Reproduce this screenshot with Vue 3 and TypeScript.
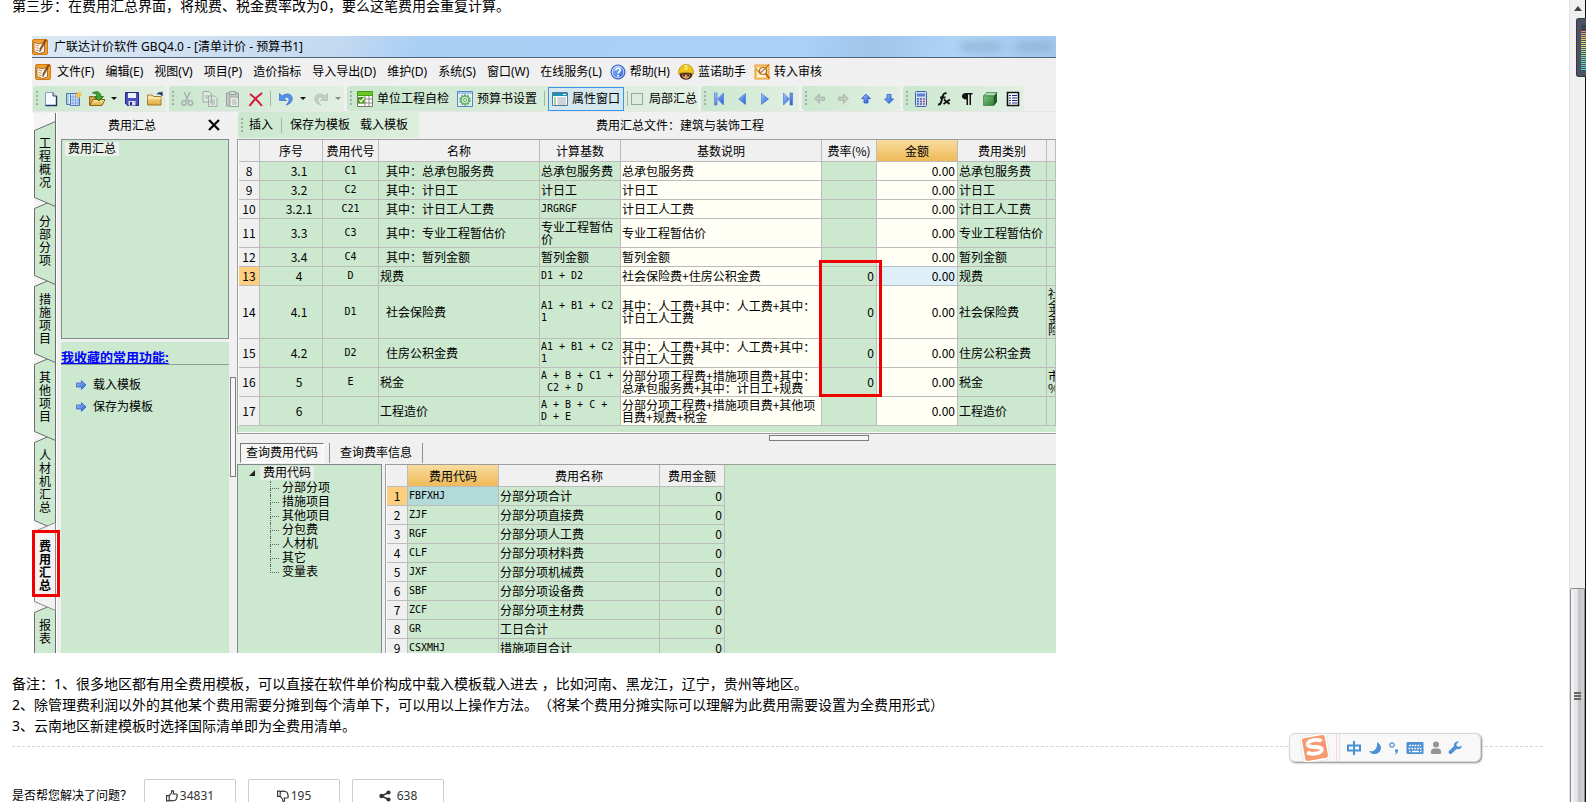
<script setup lang="ts">
interface Item { icon?: string; kind?: 'arrow' | 'sep'; name?: string; dim?: boolean }
interface FeeRow {
  n: number; no: string; code: string; name: string; base: string; desc: string
  rate: string; kind: string; note?: string; size: 'one' | 'two' | 'four'; sub?: boolean
}

const sideTabs = [
  { label: '工程概况', h: 86 },
  { label: '分部分项', h: 86 },
  { label: '措施项目', h: 86 },
  { label: '其他项目', h: 86 },
  { label: '人材机汇总', h: 97 },
  { label: '费用汇总', h: 89, active: true },
  { label: '报表', h: 86 },
]

const menus: { label: string; icon?: string }[] = [
  { label: '文件(F)' }, { label: '编辑(E)' }, { label: '视图(V)' }, { label: '项目(P)' },
  { label: '造价指标' }, { label: '导入导出(D)' }, { label: '维护(D)' }, { label: '系统(S)' },
  { label: '窗口(W)' }, { label: '在线服务(L)' },
  { label: '帮助(H)', icon: 'help' }, { label: '蓝诺助手', icon: 'helmet' }, { label: '转入审核', icon: 'review' },
]

const startGroups: Item[][] = [
  [
    { icon: 'new', name: '新建' }, { icon: 'book', name: '新建项目' }, { icon: 'open', name: '打开' },
    { kind: 'arrow', name: '打开选项' }, { icon: 'save', name: '保存' }, { icon: 'folder', name: '目录' },
  ],
  [
    { icon: 'cut', name: '剪切' }, { icon: 'copy', name: '复制' }, { icon: 'paste', name: '粘贴' },
    { icon: 'delete', name: '删除' }, { kind: 'sep' }, { icon: 'undo', name: '撤销' },
    { kind: 'arrow', name: '撤销选项' }, { icon: 'redo', name: '恢复' }, { kind: 'arrow', name: '恢复选项', dim: true },
  ],
]
const endGroups: Item[][] = [
  [
    { icon: 'first', name: '第一条' }, { icon: 'prev', name: '上一条' },
    { icon: 'next', name: '下一条' }, { icon: 'last', name: '最后一条' },
  ],
  [
    { icon: 'left', name: '左移' }, { icon: 'right', name: '右移' },
    { icon: 'up', name: '上移' }, { icon: 'down', name: '下移' },
  ],
  [
    { icon: 'calc', name: '计算器' }, { icon: 'fx', name: '函数' }, { icon: 'para', name: '段落' },
    { icon: 'cube', name: '图元' }, { icon: 'list', name: '列表' },
  ],
]

const feeRows: FeeRow[] = [
  { n: 8, no: '3.1', code: 'C1', name: '其中：总承包服务费', base: '总承包服务费', desc: '总承包服务费', rate: '', kind: '总承包服务费', size: 'one', sub: true },
  { n: 9, no: '3.2', code: 'C2', name: '其中：计日工', base: '计日工', desc: '计日工', rate: '', kind: '计日工', size: 'one', sub: true },
  { n: 10, no: '3.2.1', code: 'C21', name: '其中：计日工人工费', base: 'JRGRGF', desc: '计日工人工费', rate: '', kind: '计日工人工费', size: 'one', sub: true },
  { n: 11, no: '3.3', code: 'C3', name: '其中：专业工程暂估价', base: '专业工程暂估\n价', desc: '专业工程暂估价', rate: '', kind: '专业工程暂估价', size: 'two', sub: true },
  { n: 12, no: '3.4', code: 'C4', name: '其中：暂列金额', base: '暂列金额', desc: '暂列金额', rate: '', kind: '暂列金额', size: 'one', sub: true },
  { n: 13, no: '4', code: 'D', name: '规费', base: 'D1 + D2', desc: '社会保险费+住房公积金费', rate: '0', kind: '规费', size: 'one' },
  { n: 14, no: '4.1', code: 'D1', name: '社会保险费', base: 'A1 + B1 + C2\n1', desc: '其中：人工费+其中：人工费+其中：\n计日工人工费', rate: '0', kind: '社会保险费', note: '社\n金\n金\n险', size: 'four', sub: true },
  { n: 15, no: '4.2', code: 'D2', name: '住房公积金费', base: 'A1 + B1 + C2\n1', desc: '其中：人工费+其中：人工费+其中：\n计日工人工费', rate: '0', kind: '住房公积金费', size: 'two', sub: true },
  { n: 16, no: '5', code: 'E', name: '税金', base: 'A + B + C1 +\n C2 + D', desc: '分部分项工程费+措施项目费+其中：\n总承包服务费+其中：计日工+规费', rate: '0', kind: '税金', note: '市\n%', size: 'two' },
  { n: 17, no: '6', code: '', name: '工程造价', base: 'A + B + C +\nD + E', desc: '分部分项工程费+措施项目费+其他项\n目费+规费+税金', rate: '', kind: '工程造价', size: 'two' },
]
const isCode = (s: string): boolean => /^[A-Z]/.test(s)

const tree = ['分部分项', '措施项目', '其他项目', '分包费', '人材机', '其它', '变量表']

const codes: [string, string][] = [
  ['FBFXHJ', '分部分项合计'], ['ZJF', '分部分项直接费'], ['RGF', '分部分项人工费'],
  ['CLF', '分部分项材料费'], ['JXF', '分部分项机械费'], ['SBF', '分部分项设备费'],
  ['ZCF', '分部分项主材费'], ['GR', '工日合计'], ['CSXMHJ', '措施项目合计'],
]
const meter = ['#2f3540', '#2f3540', '#2f3540', '#e08a6a', '#e8a070', '#ecb070', '#efc070', '#f0cc70', '#efd870', '#e8e070', '#dde478', '#cce480', '#b8e488', '#a4e490', '#94e298', '#88e0a0', '#80dfa8', '#78deb0', '#70dcb8', '#68dac0', '#60d8c8', '#58d6d0', '#54d4d4']
</script>

<template>
  <svg class="defs" aria-hidden="true">
    <defs>
      <linearGradient id="blue" x1="0" y1="0" x2="1" y2="1"><stop offset="0" stop-color="#a9c9fb" /><stop offset="1" stop-color="#2058d0" /></linearGradient>
      <linearGradient id="gold" x1="0" y1="0" x2="0" y2="1"><stop offset="0" stop-color="#fbe9a6" /><stop offset="1" stop-color="#dfa83a" /></linearGradient>
      <linearGradient id="leaf" x1="0" y1="0" x2="1" y2="1"><stop offset="0" stop-color="#7cc47c" /><stop offset="1" stop-color="#2f7d38" /></linearGradient>
    </defs>
    <symbol id="i-app" viewBox="0 0 16 16"><rect x=".5" y=".5" width="15" height="15" rx="1.5" fill="#f0a030" stroke="#d07a10" /><path d="M2 3.500 7.500 5l5-2v10l-5 1.500-5.500-2z" fill="#fffaf0" stroke="#8a4a10" stroke-width=".7" /><path d="M3.500 6 7 7M3.500 8.500l3 .8M3.500 11l3 .6" stroke="#b07030" stroke-width=".8" /><path d="m14.500 1-5 9-1.800 3 .300-3.500L12.800 1z" fill="#a0521a" stroke="#5c2c08" stroke-width=".5" /></symbol>
    <symbol id="i-help" viewBox="0 0 16 16"><circle cx="8" cy="8" r="7" fill="url(#blue)" stroke="#2a55b8" /><circle cx="8" cy="8" r="5.800" fill="none" stroke="#dce9ff" stroke-width=".8" /><path d="M5.800 6.300c0-3 4.600-2.800 4.400 0-.1 1.500-2.100 1.500-2.100 3.200" fill="none" stroke="#fff" stroke-width="1.700" /><circle cx="8.100" cy="11.800" r="1.100" fill="#fff" /></symbol>
    <symbol id="i-helmet" viewBox="0 0 16 16"><path d="M1.500 8.500h13c.5 4.500-2.500 7.200-6.500 7.200s-7-2.700-6.500-7.200z" fill="#4a2618" /><path d="M4 10.500h8c.2 2.600-1.500 4.300-4 4.300s-4.200-1.700-4-4.300z" fill="#d99a6c" /><path d="M.3 10C.3 4 3.500.5 8 .5S15.700 4 15.700 10c-4-2-11.400-2-15.400 0z" fill="#f0c41c" stroke="#b88808" stroke-width=".7" /><path d="M6.500 1h3v5h-3z" fill="#fbe36a" /><path d="M5 11.500h1.800M9.200 11.500H11" stroke="#301808" stroke-width="1.600" /></symbol>
    <symbol id="i-review" viewBox="0 0 16 16"><rect x="1" y="1" width="14" height="14" fill="#f8c868" stroke="#e89a30" /><path d="M3 3.500h9v10H3z" fill="#fff3d0" /><circle cx="9" cy="7" r="3.500" fill="#e8f4ff" stroke="#b07020" stroke-width="1.200" /><path d="m11.500 9.500 4 5" stroke="#c06010" stroke-width="2" /><path d="m2.500 5 3.500 4.500L15 .5" fill="none" stroke="#c07818" stroke-width="1.200" /></symbol>
    <symbol id="i-new" viewBox="0 0 16 16"><path d="M2.500 1.500H10l3.500 3.500v9.500h-11z" fill="#f8fbff" stroke="#8a9cc0" /><path d="M10 1.500V5h3.500" fill="#c8d6ef" stroke="#35456e" /><path d="M13.500 5v9.500h-11" fill="none" stroke="#223463" stroke-width="1.400" /></symbol>
    <symbol id="i-book" viewBox="0 0 16 16"><path d="M.5 2.500h4v11h-4zM4.500 2.500h9v12h-9z" fill="#dfeafa" stroke="#4b78b8" /><path d="M7 3v11M9.500 3v11M12 3v11M2 3v10M5 6h8M5 9h8M5 12h8" stroke="#6f9bd4" stroke-width=".8" /><path d="m12.500 0 .8 2.200L15.800 1l-1 2.300 1.200 1.200-2 .5.500 2.500-2-1.500L10.600 7l.6-2.200L9 4l2-1-.6-2.200 1.600.9z" fill="#f6bf3c" /></symbol>
    <symbol id="i-open" viewBox="0 0 16 16"><path d="M.5 14V5.500h4l1.500 2h7V14z" fill="#d9a53c" stroke="#8c651a" /><path d="m.8 14.500 3-6H16l-3 6z" fill="url(#gold)" stroke="#8c651a" /><path d="M3.500 2c4.500-2.500 8-1 8.500 3.500h2.500L10 10 5.500 5.500H8C7.800 3 6 2 3.500 2z" fill="#3fa42a" stroke="#1c6414" stroke-width=".8" /></symbol>
    <symbol id="i-save" viewBox="0 0 16 16"><path d="M1.500 1.500h13v13h-11l-2-2z" fill="#4a4fc0" stroke="#25287c" /><path d="M4 2h8v5H4z" fill="#eef2ff" /><path d="M4.500 10h7v4.500h-7z" fill="#d8def4" /><path d="M6 11h2v3H6z" fill="#25287c" /></symbol>
    <symbol id="i-folder" viewBox="0 0 16 16"><path d="M.5 14V4h5l1 1.500H14V14z" fill="url(#gold)" stroke="#a37a26" /><path d="M.5 7H14" stroke="#fff4cc" /><path d="M9.500 3.500c1-2 2.500-2.500 4-2.200L15.500.5l.3 4.800-3.800-2z" fill="#24406e" /></symbol>
    <symbol id="i-cut" viewBox="0 0 16 16"><path d="m5 1 4.500 9M11 1 6.500 10" stroke="#a8aeb0" stroke-width="1.400" /><circle cx="5" cy="12" r="2.200" fill="none" stroke="#a8aeb0" stroke-width="1.500" /><circle cx="11.500" cy="12" r="2.200" fill="none" stroke="#a8aeb0" stroke-width="1.500" /></symbol>
    <symbol id="i-copy" viewBox="0 0 16 16"><path d="M1 .5h6l2.500 2.500v8H1zM6.500 5h6L15 7.500v8H6.500z" fill="#dfe9e0" stroke="#a3aba6" /><path d="M3 5h4M3 7h3M8.500 9h4.500M8.500 11h4.500M8.500 13h4.500" stroke="#a3aba6" /></symbol>
    <symbol id="i-paste" viewBox="0 0 16 16"><rect x="1.500" y="2" width="12" height="13" fill="#bfc6c0" stroke="#9aa29c" /><path d="M4.500.5h6v3h-6z" fill="#d8dcd8" stroke="#9aa29c" /><path d="M5 6h6.500l2 2v7.500H5z" fill="#e8efe8" stroke="#9aa29c" /><path d="M7 9h4M7 11h5M7 13h5" stroke="#a8b0aa" /></symbol>
    <symbol id="i-delete" viewBox="0 0 16 16"><path d="M2 3c4 3 9 8 12 12M14 2C10 5 5 10 1.500 15" fill="none" stroke="#d81838" stroke-width="2" /></symbol>
    <symbol id="i-undo" viewBox="0 0 16 16"><path d="M1.500 2.500V9.500h7L6.200 7.200c2.800-2 5.300-.4 4.800 2.100-.3 1.700-1.200 3.200-3 4.700 4.500-1 6.700-4 6.200-7C13.700 2.700 8.300 1.500 4 5z" fill="#5590ee" stroke="#2a5cc0" stroke-width=".6" /></symbol>
    <symbol id="i-redo" viewBox="0 0 16 16"><path d="M14.500 2.500V9.500h-7l2.300-2.300C7 5.200 4.500 6.800 5 9.300c.3 1.700 1.200 3.200 3 4.700-4.500-1-6.700-4-6.200-7C2.300 2.700 7.700 1.500 12 5z" fill="#c2cec4" stroke="#aab6ae" stroke-width=".6" /></symbol>
    <symbol id="i-check" viewBox="0 0 16 16"><path d="M.5.500h15v15H.5z" fill="#fff" stroke="#777" /><path d="M.5.500h15v4H.5z" fill="#6cc824" stroke="#4e9c18" /><path d="M.5 8h15M.5 12h15M8 5v10.500M12 5v10.500" stroke="#8a8a8a" /><path d="M1 6h6.500v6.500H1z" fill="#4e9c18" /><path d="m2.500 9 1.500 1.700L7 7" fill="none" stroke="#fff" stroke-width="1.200" /></symbol>
    <symbol id="i-gear" viewBox="0 0 16 16"><path d="M.5.500h15v15H.5z" fill="#e4effb" stroke="#5b86c4" /><path d="M1 1h14v2H1z" fill="#a8c6ec" /><circle cx="8" cy="9" r="4.800" fill="none" stroke="#55a858" stroke-width="1.800" stroke-dasharray="2 1" /><circle cx="8" cy="9" r="3.900" fill="#d4efd4" stroke="#55a858" /><circle cx="8" cy="9" r="1.500" fill="#fff" stroke="#55a858" /></symbol>
    <symbol id="i-prop" viewBox="0 0 16 16"><path d="M.5 1.500h15v13H.5z" fill="#fff" stroke="#587898" /><path d="M1 2h14v3H1z" fill="#2090b8" /><path d="M11 3.500h3" stroke="#fff" /><path d="M2 7h2M2 9h2M2 11h2M2 13h2" stroke="#45a648" /><path d="M5.500 7H14M5.500 9H14M5.500 11H14M5.500 13H14" stroke="#9aa6ae" /></symbol>
    <symbol id="i-first" viewBox="0 0 16 16"><path d="M3.500 2h2.500v12H3.500zM12.500 2v12L6.500 8z" fill="url(#blue)" stroke="#4070d8" stroke-width=".6" /></symbol>
    <symbol id="i-prev" viewBox="0 0 16 16"><path d="M11.500 2.500v11L4.500 8z" fill="url(#blue)" stroke="#4070d8" stroke-width=".6" /></symbol>
    <symbol id="i-next" viewBox="0 0 16 16"><path d="M4.500 2.500v11L11.500 8z" fill="url(#blue)" stroke="#4070d8" stroke-width=".6" /></symbol>
    <symbol id="i-last" viewBox="0 0 16 16"><path d="M10 2h2.500v12H10zM3.500 2v12L9.500 8z" fill="url(#blue)" stroke="#4070d8" stroke-width=".6" /></symbol>
    <symbol id="i-left" viewBox="0 0 16 16"><path d="M2.500 7.500 7.500 3v3h5v3.500h-5v3z" fill="#bccabf" stroke="#a0aea4" stroke-width=".7" /></symbol>
    <symbol id="i-right" viewBox="0 0 16 16"><path d="M13.500 7.500 8.500 3v3h-5v3.500h5v3z" fill="#bccabf" stroke="#a0aea4" stroke-width=".7" /></symbol>
    <symbol id="i-up" viewBox="0 0 16 16"><path d="M8 3 12.500 7.500H10V12H6V7.500H3.500z" fill="url(#blue)" stroke="#2a58c8" stroke-width=".8" /></symbol>
    <symbol id="i-down" viewBox="0 0 16 16"><path d="M8 12.500 12.500 8H10V3.500H6V8H3.500z" fill="url(#blue)" stroke="#2a58c8" stroke-width=".8" /></symbol>
    <symbol id="i-calc" viewBox="0 0 16 16"><rect x="2.500" y=".5" width="11" height="15" rx="1" fill="#cfdcf6" stroke="#4462a8" /><path d="M4 2.500h8v3H4z" fill="#5a80d0" /><path d="M4 8h2M7 8h2M4 10.500h2M7 10.500h2M4 13h2M7 13h2" stroke="#3f5fae" stroke-width="1.400" /><path d="M10 8h2M10 10.500h2M10 13h2" stroke="#d05050" stroke-width="1.400" /></symbol>
    <symbol id="i-fx" viewBox="0 0 16 16"><path d="M2 13.500c2 .5 2.800-1 3.300-3L7 4.500c.6-2.200 2-2.500 3.500-2M4 6.500h5.500" fill="none" stroke="#111" stroke-width="1.900" /><path d="m8 8.500 5.500 4.500M14 8.500l-6.500 4.500" stroke="#111" stroke-width="1.700" /></symbol>
    <symbol id="i-para" viewBox="0 0 16 16"><path d="M13.500 2H7C1.500 2 1.500 8.500 7.500 8.500V14H9V3.500h1.500V14H12V3.500h1.500z" fill="#111" /></symbol>
    <symbol id="i-cube" viewBox="0 0 16 16"><path d="m1.500 5 3-3.500h10.500l-3 3.500z" fill="#a8dca8" stroke="#286a30" stroke-width=".6" /><path d="M1.500 5H12v9.500H1.500z" fill="url(#leaf)" stroke="#286a30" stroke-width=".6" /><path d="m12 5 3-3.500V11l-3 3.500z" fill="#1f5a28" /></symbol>
    <symbol id="i-list" viewBox="0 0 16 16"><path d="M2.500 1.500h11v13h-11z" fill="#fff" stroke="#111" stroke-width="1.600" /><path d="M4 4.500h2M4 7h2M4 9.500h2M4 12h2M7 4.500h5M7 7h5M7 9.500h5M7 12h5" stroke="#1c2488" stroke-width="1.200" /></symbol>
    <symbol id="i-go" viewBox="0 0 16 16"><path d="M3.500 6h5V3.500L13 8l-4.500 4.500V10h-5z" fill="url(#blue)" stroke="#2a58c8" stroke-width=".7" /></symbol>
  </svg>

  <div class="page">
    <main class="article">
      <p class="step">第三步：在费用汇总界面，将规费、税金费率改为0，要么这笔费用会重复计算。</p>

      <section class="window">
        <header class="titlebar">
          <svg class="ic"><use href="#i-app" /></svg>
          <span>广联达计价软件 GBQ4.0 - [清单计价 - 预算书1]</span>
          <i class="ghost"></i>
        </header>

        <nav class="menubar">
          <svg class="ic"><use href="#i-app" /></svg>
          <button v-for="m in menus" :key="m.label" type="button" :class="{ 'with-icon': m.icon }">
            <svg v-if="m.icon" class="ic"><use :href="'#i-' + m.icon" /></svg>{{ m.label }}
          </button>
        </nav>

        <div class="toolbar">
          <div v-for="(g, gi) in startGroups" :key="gi" class="group">
            <i class="grip"></i>
            <template v-for="(t, ti) in g" :key="ti">
              <i v-if="t.kind === 'sep'" class="sep"></i>
              <button v-else-if="t.kind === 'arrow'" type="button" class="drop" :class="{ dim: t.dim }" :aria-label="t.name"></button>
              <button v-else type="button" class="tool" :aria-label="t.name"><svg class="ic"><use :href="'#i-' + t.icon" /></svg></button>
            </template>
          </div>
          <div class="group">
            <i class="grip"></i>
            <button type="button" class="text-tool"><svg class="ic"><use href="#i-check" /></svg>单位工程自检</button>
            <button type="button" class="text-tool"><svg class="ic"><use href="#i-gear" /></svg>预算书设置</button>
            <i class="sep"></i>
            <button type="button" class="text-tool pressed"><svg class="ic"><use href="#i-prop" /></svg>属性窗口</button>
            <i class="sep"></i>
            <label class="partial"><input type="checkbox">局部汇总</label>
          </div>
          <div v-for="(g, gi) in endGroups" :key="gi" class="group">
            <i class="grip"></i>
            <button v-for="t in g" :key="t.icon" type="button" class="tool" :aria-label="t.name"><svg class="ic"><use :href="'#i-' + t.icon" /></svg></button>
          </div>
        </div>

        <div class="workspace">
          <nav class="side-tabs">
            <button v-for="t in sideTabs" :key="t.label" type="button" :class="{ active: t.active }">
              <svg :viewBox="`0 0 24 ${t.h}`" width="24" :height="t.h" aria-hidden="true">
                <path :d="`M23.5 .5 2.500 9.500V${t.h - 9.500}L23.500 ${t.h - .5}z`" />
              </svg>
              <span>{{ t.label }}</span>
            </button>
          </nav>

          <aside class="panel">
            <div class="panel-head"><span>费用汇总</span>
              <button type="button" aria-label="关闭"><svg viewBox="0 0 12 12" width="12" height="12"><path d="m1 1 10 10M11 1 1 11" stroke="#000" stroke-width="2.200" /></svg></button>
            </div>
            <div class="outline"><span>费用汇总</span></div>
            <div class="favs">
              <h2>我收藏的常用功能:</h2>
              <button type="button"><svg class="ic"><use href="#i-go" /></svg>载入模板</button>
              <button type="button"><svg class="ic"><use href="#i-go" /></svg>保存为模板</button>
            </div>
          </aside>
          <div class="v-split"><i></i></div>

          <div class="content">
            <div class="sub-bar">
              <div class="sub-tools">
                <i class="grip"></i>
                <button type="button">插入</button><i class="sep"></i>
                <button type="button">保存为模板</button><button type="button">载入模板</button>
              </div>
              <span class="file">费用汇总文件：建筑与装饰工程</span>
            </div>

            <div class="grid-box">
              <table class="fees">
                <colgroup><col class="c-n"><col class="c-no"><col class="c-code"><col class="c-name"><col class="c-base"><col class="c-desc"><col class="c-rate"><col class="c-sum"><col class="c-kind"><col></colgroup>
                <thead>
                  <tr><th></th><th>序号</th><th>费用代号</th><th>名称</th><th>计算基数</th><th>基数说明</th><th>费率(%)</th><th class="hot">金额</th><th>费用类别</th><th></th></tr>
                </thead>
                <tbody>
                  <tr v-for="r in feeRows" :key="r.n" :class="[r.size, { current: r.n === 13 }]">
                    <th>{{ r.n }}</th>
                    <td class="no">{{ r.no }}</td>
                    <td class="mid mono">{{ r.code }}</td>
                    <td :class="{ sub: r.sub }">{{ r.name }}</td>
                    <td :class="{ mono: isCode(r.base) }">{{ r.base }}</td>
                    <td class="edit">{{ r.desc }}</td>
                    <td class="num">{{ r.rate }}</td>
                    <td class="num edit sum">0.00</td>
                    <td>{{ r.kind }}</td>
                    <td>{{ r.note }}</td>
                  </tr>
                </tbody>
              </table>
              <i class="mark rates"></i>
            </div>
            <div class="h-split"><i></i></div>

            <div class="query-tabs">
              <button type="button" class="on">查询费用代码</button><i class="sep"></i>
              <button type="button">查询费率信息</button><i class="sep"></i>
            </div>
            <div class="query">
              <div class="tree">
                <div class="root"><svg viewBox="0 0 6 6" width="6" height="6"><path d="M6 0v6H0z" fill="#222" /></svg><span>费用代码</span></div>
                <ul><li v-for="t in tree" :key="t">{{ t }}</li></ul>
              </div>
              <div class="codes-box">
                <table class="codes">
                  <colgroup><col class="c-n"><col class="c-id"><col class="c-name"><col class="c-amt"></colgroup>
                  <thead><tr><th></th><th class="hot">费用代码</th><th>费用名称</th><th>费用金额</th></tr></thead>
                  <tbody>
                    <tr v-for="(c, i) in codes" :key="c[0]" class="one" :class="{ current: i === 0 }">
                      <th>{{ i + 1 }}</th><td class="mono id">{{ c[0] }}</td><td>{{ c[1] }}</td><td class="num">0</td>
                    </tr>
                  </tbody>
                </table>
              </div>
            </div>
          </div>
        </div>
      </section>

      <div class="notes">
        <p>备注：1、很多地区都有用全费用模板，可以直接在软件单价构成中载入模板载入进去 ，比如河南、黑龙江，辽宁，贵州等地区。</p>
        <p>2、除管理费利润以外的其他某个费用需要分摊到每个清单下，可以用以上操作方法。（将某个费用分摊实际可以理解为此费用需要设置为全费用形式）</p>
        <p>3、云南地区新建模板时选择国际清单即为全费用清单。</p>
      </div>

      <div class="feedback">
        <span>是否帮您解决了问题？</span>
        <button type="button">
          <svg viewBox="0 0 12 12" width="12" height="12"><path d="M.6 5.600h2.600v5.300H.6zM3.200 5.600 5.400 3l.6-2.400c1.600-.2 2 .9 1.200 3.400h3.100c1 0 1.200 1 .6 1.600.5.500.4 1.200-.2 1.600.3.600.1 1.200-.5 1.500.1 1-.4 1.500-1.400 1.500C6.500 11.300 5 11.200 3.200 10" fill="none" stroke="#333" stroke-width="1.100" /></svg>34831
        </button>
        <button type="button">
          <svg viewBox="0 0 12 12" width="12" height="12"><g transform="matrix(1 0 0 -1 0 12)"><path d="M.6 5.600h2.600v5.300H.6zM3.200 5.600 5.400 3l.6-2.400c1.600-.2 2 .9 1.200 3.400h3.100c1 0 1.200 1 .6 1.600.5.500.4 1.200-.2 1.600.3.600.1 1.200-.5 1.500.1 1-.4 1.500-1.400 1.500C6.500 11.300 5 11.200 3.200 10" fill="none" stroke="#333" stroke-width="1.100" /></g></svg>195
        </button>
        <button type="button" class="share">
          <svg viewBox="0 0 12 12" width="12" height="12"><path d="M9.500 2.500 2.500 6l7 3.500" fill="none" stroke="#333" stroke-width="1.400" /><circle cx="2.500" cy="6" r="2.200" fill="#333" /><circle cx="9.500" cy="2.500" r="2.100" fill="#333" /><circle cx="9.500" cy="9.500" r="2.100" fill="#333" /></svg>638
        </button>
      </div>
    </main>

    <div class="scrollbar">
      <svg class="up" viewBox="0 0 8 5" width="8" height="5"><path d="M4 0 8 5H0z" fill="#444" /></svg>
      <div class="thumb"><i></i><i></i><i></i></div>
    </div>

    <div class="meter"><svg viewBox="0 0 5 46" width="5" height="46"><rect v-for="(c, i) in meter" :key="i" x="0" :y="i * 2" width="5" height="1" :fill="c" /></svg></div>

    <div class="ime">
      <svg class="logo" viewBox="0 0 30 28" width="30" height="28"><g transform="rotate(-10 15 14)"><rect x="1.500" y=".5" width="27" height="27" rx="4" fill="#fff" stroke="#ddd" stroke-width=".6" /><rect x="3.500" y="2.500" width="23" height="23" rx="2" fill="#f69a70" /><path d="M22.500 8.500c-2-3-13-4-14 .5s13.500 3.500 13 7.500-11.500 4-15 .5" fill="none" stroke="#fff" stroke-width="3.800" /></g></svg>
      <i class="rule"></i>
      <svg viewBox="0 0 16 16" width="16" height="16"><path d="M2 5.500h12v5H2zM8 1v14" fill="none" stroke="#4a90d2" stroke-width="2" /></svg>
      <svg viewBox="0 0 14 14" width="14" height="14"><path d="M9 1c5 3 5 8 1.500 10.800C7.500 14 3 13.500 1 10c5 1.500 9-2.500 8-9z" fill="#4a90d2" /></svg>
      <svg viewBox="0 0 12 14" width="12" height="14"><circle cx="4" cy="4" r="2.200" fill="none" stroke="#4a90d2" stroke-width="1.200" /><path d="M7 8.500h3c.2 2-.5 4-2.500 5l-.5-.8c1-.6 1.300-1.200 1-2H7z" fill="#4a90d2" /></svg>
      <svg viewBox="0 0 18 12" width="18" height="12"><rect x=".5" width="17" height="12" rx="1" fill="#4a90d2" /><path d="M3 3.500h12M2.500 6.500h13" stroke="#fff" stroke-width="1.400" stroke-dasharray="1.800 1" /><path d="M3 9.500h1.500M6 9.500h7M14 9.500h1.500" stroke="#fff" stroke-width="1.400" /></svg>
      <svg viewBox="0 0 12 14" width="12" height="14"><circle cx="6" cy="3.500" r="3" fill="#949494" /><path d="M1.500 8.500c1-1.500 8-1.500 9 0 .8 1.500.8 3.500 0 4.500h-9c-.8-1-.8-3 0-4.500z" fill="#949494" /></svg>
      <svg viewBox="0 0 14 14" width="14" height="14"><path d="M13.500 4.500 11 6 8.500 5V3L11 .7C8 0 5.500 2 6 5L.8 10.300c-1 1.200 1.200 3.700 2.700 2.500L8.500 8c3 .6 5.500-1 5-3.500z" fill="#4a90d2" /></svg>
    </div>
  </div>
</template>

<style>
html, body { height: 100%; overflow: hidden; background: #fff; }
</style>

<style scoped>
*, *::before, *::after { box-sizing: border-box; }
button { margin: 0; padding: 0; border: 0; background: none; font: inherit; color: inherit; white-space: nowrap; }
p, h2, ul { margin: 0; padding: 0; }
.defs { position: absolute; width: 0; height: 0; }
.ic { width: 16px; height: 16px; flex: none; display: block; }

.page {
  display: grid;
  grid-template-columns: minmax(0, 1fr) 17px;
  height: 100vh;
  overflow: hidden;
  font-family: "Noto Sans", "Noto Sans CJK SC", sans-serif;
  text-spacing-trim: space-all;
  color: #000;
}
.article { padding: 0 26px 0 12px; overflow: hidden; }
.step { margin-top: -5px; font-size: 14px; line-height: 21px; }

.window {
  max-width: 1024px;
  margin: 20px 0 20px 20px;
  overflow: hidden;
  background: #f0f0f0;
  font-size: 12px;
  line-height: 16px;
}
.titlebar {
  display: flex; align-items: center; gap: 6px;
  height: 22px;
  padding-right: 4px;
  border-bottom: 1px solid #4f6478;
  background: linear-gradient(100deg, #dbe8f5 0, #c3d9f0 30%, #a9cef4 38%, #abd1f8 75%, #a0c4ea 82%, #b0d4f8 90%, #a4c8ee 100%);
}
.ghost { width: 92px; height: 10px; margin-left: auto; background: linear-gradient(90deg, #7f9dbd 0 40%, transparent 50% 56%, #7f9dbd 64%); opacity: .5; filter: blur(4px); }
.menubar { display: flex; align-items: center; gap: 11px; height: 28px; padding-left: 3px; }
.menubar > .ic { margin-right: -5px; }
.menubar button { display: flex; gap: 4px; }
.menubar .with-icon { margin-left: -3px; }

.toolbar { display: flex; gap: 3px; height: 25px; padding-left: 1px; }
.group { display: flex; align-items: center; border-radius: 3px; background: linear-gradient(90deg, #cbe8cf, #e2efe3); }
.grip { flex: none; width: 3px; height: 15px; margin-left: 3px; background: repeating-linear-gradient(#a0ada3 0 2px, transparent 2px 4px) no-repeat 0 0 / 2px 100%; }
.tool { display: flex; justify-content: center; width: 23px; }
.drop { width: 12px; height: 16px; display: flex; align-items: center; justify-content: center; }
.drop::before { content: ""; border: 3px solid transparent; border-top-color: #111; border-bottom: 0; }
.drop.dim::before { border-top-color: #7f8a82; }
.sep { flex: none; width: 1px; height: 15px; margin: 0 3px; background: #a8b4aa; }
.text-tool { display: flex; align-items: center; gap: 4px; height: 24px; padding: 0 4px; }
.text-tool.pressed { padding: 0 3px; border: 1px solid #3a94ea; background: #d4e8ee; }
.partial { display: flex; align-items: center; gap: 6px; padding-right: 1px; }
.partial input { appearance: none; width: 12px; height: 12px; margin: 0; border: 1px solid #9aa69c; background: #dcebdd; }

.workspace { display: flex; align-items: stretch; border-top: 1px solid #e6e6e6; }
.side-tabs { flex: none; width: 25px; margin-top: 1px; padding-top: 8px; display: flex; flex-direction: column; border-right: 1px solid #fff; background: linear-gradient(90deg, #fff 2px, #f4f4f4 2px 23px, #6c6c6c 23px); }
.side-tabs button { position: relative; display: block; margin-bottom: -8px; text-align: left; }
.side-tabs button:nth-child(1) { z-index: 6; }
.side-tabs button:nth-child(2) { z-index: 5; }
.side-tabs button:nth-child(3) { z-index: 4; }
.side-tabs button:nth-child(4) { z-index: 3; }
.side-tabs button:nth-child(5) { z-index: 2; }
.side-tabs button.active { z-index: 7; font-weight: 700; }
.side-tabs button:last-child { margin-bottom: -37px; }
.side-tabs svg { display: block; }
.side-tabs path { fill: #cce8cf; stroke: #6c6c6c; }
.side-tabs .active path { fill: #f2f2f2; stroke: #8a8a8a; }
.side-tabs span { position: absolute; left: 7px; top: 16px; width: 13px; line-height: 13px; white-space: normal; word-break: break-all; }
.side-tabs .active span { top: 18px; }
.side-tabs .active::after { content: ""; position: absolute; left: 0; top: 8px; width: 28px; height: 67px; border: 3px solid #f00000; }

.panel { flex: none; width: 172px; padding-left: 4px; display: flex; flex-direction: column; }
.panel-head { position: relative; height: 27px; line-height: 28px; padding-right: 26px; text-align: center; }
.panel-head button { position: absolute; right: 9px; top: 7px; line-height: 0; }
.outline { height: 200px; padding: 1px 3px; border: 1px solid #7f8b8f; background: #cce8cf; }
.outline span { display: inline-block; padding: 0 3px; line-height: 14px; background: #ebf0eb; }
.favs { flex: 1; margin-top: 3px; background: #cce8cf; }
.favs h2 { height: 23px; padding-top: 8px; border-bottom: 1px solid #8f9a92; font-size: 13px; line-height: 14px; color: #00f; text-decoration: underline; }
.favs button { display: flex; align-items: center; gap: 4px; height: 22px; margin-left: 12px; }
.favs h2 + button { margin-top: 9px; }
.v-split { flex: none; width: 8px; padding: 265px 1px 0; }
.v-split i { display: block; height: 100px; border: 1px solid #7d7d7d; background: #f6f6f6; }

.content { flex: 1; min-width: 0; }
.sub-bar { display: flex; height: 27px; }
.sub-tools { flex: none; display: flex; align-items: center; height: 26px; margin-left: 1px; padding-right: 6px; border-radius: 3px; background: linear-gradient(90deg, #cbe8cf, #dcefdd); }
.sub-tools button { padding: 0 5px; }
.file { margin-left: 177px; line-height: 28px; white-space: nowrap; }

.grid-box { position: relative; overflow: hidden; height: 294px; border-top: 1px solid #9d9d9d; border-left: 1px solid #9d9d9d; border-bottom: 1px solid #f8f8f8; background: #cce8cf; }
table { border-collapse: separate; border-spacing: 0; table-layout: fixed; font-family: "Noto Sans CJK SC", sans-serif; font-size: 12px; line-height: 12px; border-left: 1px solid #fff; }
.fees { width: 100%; }
.c-n { width: 21px; } .c-no { width: 63px; } .c-code { width: 56px; } .c-name { width: 161px; }
.c-base { width: 81px; } .c-desc { width: 201px; } .c-rate { width: 55px; } .c-sum { width: 81px; } .c-kind { width: 89px; }
.c-id { width: 91px; } .c-amt { width: 65px; }
th, td { padding: 0 1px; border-right: 1px solid #bcbcbc; border-bottom: 1px solid #bcbcbc; font-weight: 400; white-space: pre; overflow: hidden; text-align: left; }
th { background: #f0f0f0; text-align: center; padding: 0; }
thead th { height: 22px; }
.one > * { height: 19px; } .two > * { height: 29px; } .four > * { height: 53px; }
.hot { background: linear-gradient(#f8dc9f, #efba57); }
.current th { background: #ffcf80; }
.no { text-align: center; padding-left: 17px; }
.mid { text-align: center; }
.mono { font-family: "DejaVu Sans Mono", monospace; font-size: 10px; }
.sub { padding-left: 7px; }
.num { text-align: right; padding-right: 2px; }
.edit { background: #fffff5; }
.current .sum { background: #dfeff8; }
.current .id { background: #b2dbd8; }
.mark { position: absolute; border: 3px solid #f00000; }
.rates { left: 581px; top: 120px; width: 63px; height: 137px; }
.h-split { height: 9px; padding-top: 1px; border-top: 1px solid #9d9d9d; }
.h-split i { display: block; width: 100px; height: 6px; margin-left: 65%; border: 1px solid #7d7d7d; background: #f6f6f6; }
.query-tabs { display: flex; align-items: center; height: 22px; padding-left: 3px; }
.query-tabs button { height: 20px; padding: 0 5px; }
.query-tabs .on { border: 1px solid #777; border-right-color: #fff; border-bottom-color: #fff; background: #f6f6f6; }
.query-tabs .sep { height: 20px; margin: 0 5px; background: #8f8f8f; }
.query { display: flex; gap: 3px; height: 189px; }
.tree { flex: none; width: 145px; border: 1px solid #85888f; border-bottom: 0; background: #cce8cf; line-height: 14px; }
.root { display: flex; align-items: center; gap: 5px; height: 16px; padding-left: 11px; }
.root span { padding: 0 3px; background: #e8efe8; border-radius: 2px; }
.tree ul { list-style: none; margin-left: 32px; }
.tree li { position: relative; padding-left: 12px; }
.tree li::before { content: ""; position: absolute; left: 0; top: 0; width: 9px; height: 8px; border-left: 1px dotted #666; border-bottom: 1px dotted #666; }
.tree li:not(:last-child)::after { content: ""; position: absolute; left: 0; top: 8px; height: 6px; border-left: 1px dotted #666; }
.codes-box { flex: 1; min-width: 0; overflow: hidden; border-top: 1px solid #9d9d9d; border-left: 1px solid #9d9d9d; background: #cce8cf; }
.codes { width: 339px; }

.notes { font-size: 14px; line-height: 21px; padding-bottom: 10px; border-bottom: 1px dashed #d4d4d4; }
.feedback { display: flex; align-items: center; gap: 12px; margin-top: 32px; font-size: 12px; line-height: 16px; }
.feedback button { display: flex; align-items: center; justify-content: center; gap: 2px; width: 92px; height: 33px; border: 1px solid #ccc; border-radius: 2px; color: #333; }
.feedback .share { gap: 6px; }

.scrollbar { display: flex; flex-direction: column; align-items: center; border-left: 1px solid #e2e2e2; border-right: 1px solid #111; background: #f0f0f0; padding-top: 6px; }
.up { flex: none; }
.thumb { display: flex; flex-direction: column; align-items: center; justify-content: center; gap: 1px; width: 15px; flex: 1; margin-top: 577px; border: 1px solid #8d8d8d; border-radius: 2px 2px 0 0; border-bottom: 0; background: linear-gradient(90deg, #f6f6f6, #e2e2e4 50%, #c0c0c6 60%, #d2d2d6); }
.thumb i { width: 7px; height: 2px; background: #666; }
.meter { position: fixed; right: 0; top: 18px; width: 10px; height: 59px; padding: 6px 1px 0 4px; border: 1px solid #343946; border-right: 0; border-radius: 3px 0 0 3px; background: #4c5262; line-height: 0; }
.ime { position: fixed; right: 105px; bottom: 40px; display: flex; align-items: center; height: 29px; width: 192px; padding-left: 10px; gap: 6px; border: 1px solid #d8d8d8; border-radius: 6px; background: #f8f8f8; box-shadow: 1px 1px 2px #888; }
.ime .rule { width: 4px; height: 27px; border: 1px solid #f6dada; border-top: 0; border-bottom: 0; }
.ime .logo { flex: none; }
</style>
